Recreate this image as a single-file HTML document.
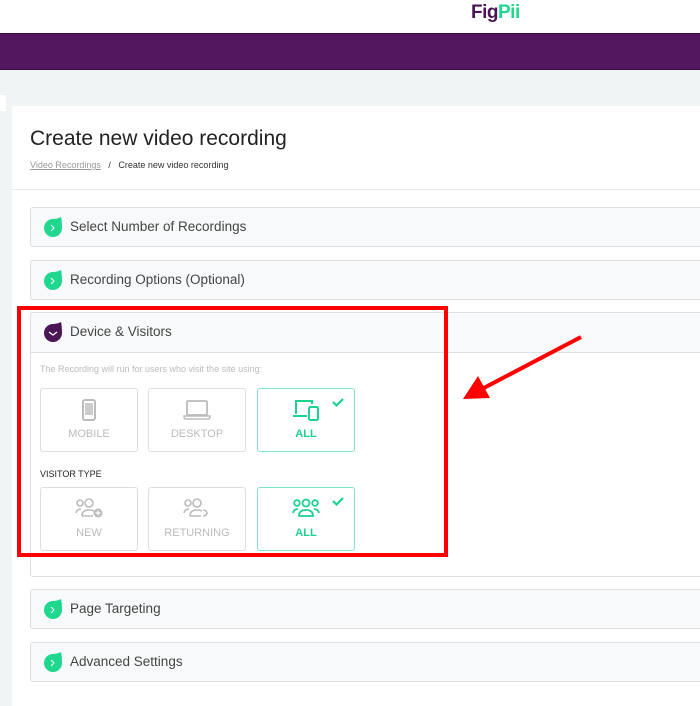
<!DOCTYPE html>
<html><head><style>
*{margin:0;padding:0;box-sizing:border-box}
body{width:700px;height:684px;overflow:hidden;background:#f1f4f5;font-family:"Liberation Sans",sans-serif;position:relative}
.abs{position:absolute}
.top{left:0;top:0;width:700px;height:33px;background:#fff}
.logo{left:471px;top:2px;font-size:19px;font-weight:bold;letter-spacing:-0.5px}
.bar{left:0;top:33px;width:700px;height:37px;background:#52175e;border-top:1px solid #3a0f44;border-bottom:1px solid #3a0f44}
.card{left:12px;top:106px;width:700px;height:600px;background:#fff}
.tab{left:0;top:95px;width:6px;height:16px;background:#fff}
h1{position:absolute;left:30px;top:127px;font-weight:normal;font-size:21px;color:#222}
.bc{left:30px;top:160px;font-size:9px;color:#333}
.bc u{color:#999}
.sep{left:12px;top:189px;width:700px;height:1px;background:#e8e8e8}
.acc{left:30px;width:690px;height:40px;background:#f8f9fa;border:1px solid #dedede;border-radius:3px}
.acc span{position:absolute;left:39px;top:11px;font-size:13.5px;color:#444}
.ic{position:absolute;left:11px;top:9px}
.tile{width:98px;height:64px;border:1px solid #ddd;border-radius:3px;background:#fff}
.tile .t{position:absolute;left:0;width:100%;text-align:center;top:39px;font-size:11px;color:#bbb}
.tile.on{border-color:#7fe6c0}
.tile.on .t{color:#1dd18f;font-weight:bold}
.tile svg{position:absolute;left:50%;transform:translateX(-50%);top:10px}
.chk{position:absolute;right:10px;top:6px}
</style></head><body>
<div class="abs top"></div>
<div class="abs logo"><span style="color:#4a1656">Fig</span><span style="color:#1fd88e">Pii</span></div>
<div class="abs bar"></div>
<div class="abs tab"></div>
<div class="abs card"></div>
<h1>Create new video recording</h1>
<div class="abs bc"><u>Video Recordings</u> &nbsp;&nbsp;/&nbsp;&nbsp; Create new video recording</div>
<div class="abs sep"></div>

<div class="abs acc" style="top:207px"><svg class="ic" width="22" height="22" viewBox="0 0 22 22"><path d="M11 2 Q15 2 19 0 Q20 4 20 11 A9 9 0 1 1 11 2Z" fill="#1fd88e"/><path d="M9 8l3 3-3 3" stroke="#fff" stroke-width="1" fill="none"/></svg><span>Select Number of Recordings</span></div>
<div class="abs acc" style="top:260px"><svg class="ic" width="22" height="22" viewBox="0 0 22 22"><path d="M11 2 Q15 2 19 0 Q20 4 20 11 A9 9 0 1 1 11 2Z" fill="#1fd88e"/><path d="M9 8l3 3-3 3" stroke="#fff" stroke-width="1" fill="none"/></svg><span>Recording Options (Optional)</span></div>

<div class="abs" style="left:30px;top:312px;width:690px;height:265px;background:#fff;border:1px solid #dedede;border-radius:3px"></div>
<div class="abs acc" style="top:312px;height:41px;border-radius:3px 3px 0 0"><svg class="ic" width="22" height="22" viewBox="0 0 22 22"><path d="M11 2 Q15 2 19 0 Q20 4 20 11 A9 9 0 1 1 11 2Z" fill="#4a1656"/><path d="M7 10l4 3 4-3" stroke="#fff" stroke-width="1.3" fill="none"/></svg><span>Device &amp; Visitors</span></div>
<div class="abs" style="left:40px;top:364px;font-size:9px;color:#bbb">The Recording will run for users who visit the site using:</div>

<div class="abs tile" style="left:40px;top:388px"><svg width="16" height="22" viewBox="0 0 16 22"><rect x="2" y="1" width="12" height="20" rx="2" fill="none" stroke="#bbb" stroke-width="2"/><rect x="4" y="4" width="8" height="12" fill="#ccc"/></svg><div class="t">MOBILE</div></div>
<div class="abs tile" style="left:148px;top:388px"><svg width="28" height="22" viewBox="0 0 28 22"><rect x="4" y="2" width="20" height="14" rx="1" fill="none" stroke="#bbb" stroke-width="1.8"/><path d="M1 17h26v1a2 2 0 0 1-2 2H3a2 2 0 0 1-2-2z" fill="none" stroke="#bbb" stroke-width="1.5"/></svg><div class="t">DESKTOP</div></div>
<div class="abs tile on" style="left:257px;top:388px"><svg width="28" height="22" viewBox="0 0 28 22"><path d="M4 15V2h16v3" fill="none" stroke="#1dd18f" stroke-width="2"/><path d="M1 16h14v2H1z" fill="#1dd18f"/><rect x="17" y="8" width="9" height="13" rx="1.5" fill="none" stroke="#1dd18f" stroke-width="2"/></svg><svg class="chk" style="left:auto;transform:none;top:8px" width="12" height="10" viewBox="0 0 12 10"><path d="M1 5l3.5 3.5L11 2" stroke="#1dd18f" stroke-width="2.2" fill="none"/></svg><div class="t">ALL</div></div>

<div class="abs" style="left:40px;top:469px;font-size:9px;color:#222">VISITOR TYPE</div>
<div class="abs tile" style="left:40px;top:487px"><svg width="28" height="20" viewBox="0 0 28 20"><circle cx="5" cy="5" r="3" fill="none" stroke="#bbb" stroke-width="1.6"/><circle cx="14" cy="5" r="4" fill="none" stroke="#bbb" stroke-width="1.6"/><path d="M1 15q1-4 5-4M7 18q0-6 7-6q3 0 5 1M7 18h11" fill="none" stroke="#bbb" stroke-width="1.6"/><circle cx="23" cy="15" r="4.5" fill="#bbb"/><path d="M23 12.5v5M20.5 15h5" stroke="#fff" stroke-width="1.3"/></svg><div class="t">NEW</div></div>
<div class="abs tile" style="left:148px;top:487px"><svg width="28" height="20" viewBox="0 0 28 20"><circle cx="5" cy="5" r="3" fill="none" stroke="#bbb" stroke-width="1.6"/><circle cx="14" cy="5" r="4" fill="none" stroke="#bbb" stroke-width="1.6"/><path d="M1 15q1-4 5-4M7 18q0-6 7-6q3 0 5 1M7 18h11M20 12a4 3 0 1 1 0 6" fill="none" stroke="#bbb" stroke-width="1.6"/></svg><div class="t">RETURNING</div></div>
<div class="abs tile on" style="left:257px;top:487px"><svg width="28" height="20" viewBox="0 0 28 20"><circle cx="5" cy="5" r="2.8" fill="none" stroke="#1dd18f" stroke-width="1.8"/><circle cx="14" cy="5" r="3.5" fill="none" stroke="#1dd18f" stroke-width="1.8"/><circle cx="23" cy="5" r="2.8" fill="none" stroke="#1dd18f" stroke-width="1.8"/><path d="M1 15q1-4 5-4M27 15q-1-4-5-4M7 18q0-6 7-6t7 6z" fill="none" stroke="#1dd18f" stroke-width="1.8"/></svg><svg class="chk" style="left:auto;transform:none;top:8px" width="12" height="10" viewBox="0 0 12 10"><path d="M1 5l3.5 3.5L11 2" stroke="#1dd18f" stroke-width="2.2" fill="none"/></svg><div class="t">ALL</div></div>

<div class="abs acc" style="top:589px"><svg class="ic" width="22" height="22" viewBox="0 0 22 22"><path d="M11 2 Q15 2 19 0 Q20 4 20 11 A9 9 0 1 1 11 2Z" fill="#1fd88e"/><path d="M9 8l3 3-3 3" stroke="#fff" stroke-width="1" fill="none"/></svg><span>Page Targeting</span></div>
<div class="abs acc" style="top:642px"><svg class="ic" width="22" height="22" viewBox="0 0 22 22"><path d="M11 2 Q15 2 19 0 Q20 4 20 11 A9 9 0 1 1 11 2Z" fill="#1fd88e"/><path d="M9 8l3 3-3 3" stroke="#fff" stroke-width="1" fill="none"/></svg><span>Advanced Settings</span></div>

<div class="abs" style="left:17px;top:306px;width:431px;height:251px;border:4px solid #f00"></div>
<svg class="abs" style="left:0;top:0" width="700" height="684"><line x1="581" y1="337" x2="480" y2="390" stroke="#f00" stroke-width="4"/><path d="M463 399L478 376L490 398Z" fill="#f00"/></svg>
</body></html>
